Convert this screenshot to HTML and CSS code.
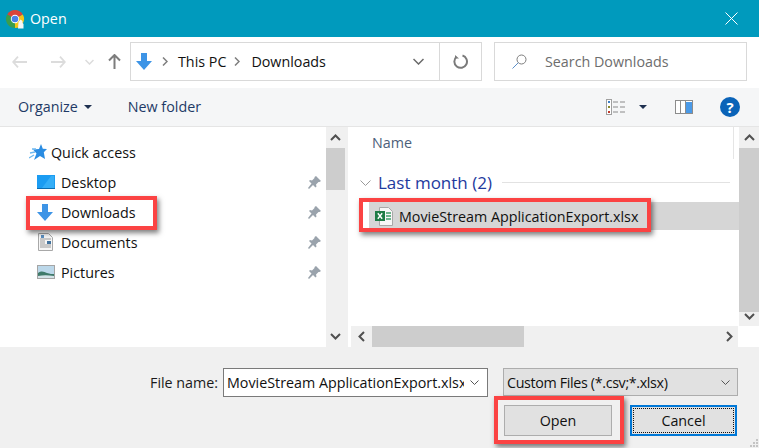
FILE: index.html
```html
<!DOCTYPE html>
<html>
<head lang="en">
    <meta charset="UTF-8">
    <title>Open</title>
    <link rel="stylesheet" href="styles.css">
</head>
<body>
<div id="dialog">
    <div class="titlebar">
        <svg class="chrome" width="20" height="20" viewBox="0 0 20 20">
            <path d="M10 10L2.200 5.500A9 9 0 0 1 17.800 5.500z" fill="#d9443a"/>
            <path d="M10 10L2.200 5.500A9 9 0 0 0 10 19z" fill="#3b9d4c"/>
            <path d="M10 10L17.800 5.500A9 9 0 0 1 10 19z" fill="#f5c518"/>
            <circle cx="10" cy="10" r="4.200" fill="#fff"/>
            <circle cx="10" cy="10" r="3.300" fill="#4a80e8"/>
            <path d="M13.500 13l2-2.500 2 1.500v2l1 1v4.500h-5.500z" fill="#f6f6f6"/>
        </svg>
        <span class="title">Open</span>
        <svg class="close" width="13" height="13" viewBox="0 0 13 13"><path d="M.5.500l12 12M12.500.500l-12 12" stroke="#fff" fill="none"/></svg>
    </div>

    <div class="nav">
        <svg class="nav-arrow" width="15" height="12" viewBox="0 0 15 12"><path d="M6 .7L1.200 6 6 11.300M1.200 6H15" stroke="#dcdcdc" stroke-width="1.800" fill="none"/></svg>
        <svg class="nav-arrow next" width="15" height="12" viewBox="0 0 15 12"><path d="M9 .7L13.800 6 9 11.300M13.800 6H0" stroke="#dcdcdc" stroke-width="1.800" fill="none"/></svg>
        <svg class="nav-drop" width="9" height="6" viewBox="0 0 9 6"><path d="M.5 1l4 4 4-4" stroke="#dcdcdc" stroke-width="1.500" fill="none"/></svg>
        <svg class="nav-up" width="13" height="15" viewBox="0 0 13 15"><path d="M1 6.500l5.500-5.500 5.500 5.500M6.500 1v14" stroke="#7d7d7d" stroke-width="2" fill="none"/></svg>
        <div class="address">
            <svg class="addr-icon" width="16" height="17" viewBox="0 0 16 17"><path d="M5 0h6v8h5l-8 9-8-9h5z" fill="#3d94e6"/></svg>
            <svg class="crumb-sep" width="6" height="9" viewBox="0 0 6 9"><path d="M1 .500l4 4-4 4" stroke="#7d7d7d" stroke-width="1.500" fill="none"/></svg>
            <span class="crumb">This PC</span>
            <svg class="crumb-sep second" width="6" height="9" viewBox="0 0 6 9"><path d="M1 .500l4 4-4 4" stroke="#7d7d7d" stroke-width="1.500" fill="none"/></svg>
            <span class="crumb">Downloads</span>
            <svg class="addr-drop" width="11" height="7" viewBox="0 0 11 7"><path d="M.5 1l5 5 5-5" stroke="#6a6a6a" stroke-width="1.500" fill="none"/></svg>
            <div class="refresh">
                <svg width="15" height="15" viewBox="0 0 15 15"><path d="M3.500 2.800A6.300 6.300 0 1 0 9.500 1.500" stroke="#7a7a7a" stroke-width="2" fill="none"/><path d="M2 1v3.500h4z" fill="#7a7a7a"/></svg>
            </div>
        </div>
        <div class="search">
            <svg width="15" height="15" viewBox="0 0 15 15"><circle cx="9.500" cy="5.500" r="4.500" stroke="#7d7d7d" fill="none"/><path d="M6.200 8.800L.5 14.500" stroke="#5b8fc7" fill="none"/></svg>
            <span>Search Downloads</span>
        </div>
    </div>

    <div class="toolbar">
        <span class="tool">Organize</span>
        <span class="caret"></span>
        <span class="tool newfolder">New folder</span>
        <svg class="views" width="19" height="16" viewBox="0 0 19 16">
            <rect x=".5" y=".5" width="5" height="15" fill="#fff" stroke="#a0a0a0"/>
            <rect x="2" y="2" width="2" height="2" fill="#3d7fc4"/>
            <rect x="2" y="7" width="2" height="2" fill="#8a8a2a"/>
            <rect x="2" y="12" width="2" height="2" fill="#c0392b"/>
            <path d="M7 3h5M14 3h5M7 8h5M14 8h5M7 13h5M14 13h5" stroke="#8a8a8a"/>
        </svg>
        <span class="caret views-caret"></span>
        <svg class="pane-icon" width="18" height="14" viewBox="0 0 18 14">
            <rect x=".5" y=".5" width="17" height="13" fill="#fff" stroke="#8c8c8c"/>
            <rect x="5" y="1" width="1" height="12" fill="#8c8c8c"/>
            <rect x="11" y="2" width="6" height="11" fill="#4a9ae8"/>
            <rect x="10" y="1" width="1" height="12" fill="#8c8c8c"/>
        </svg>
        <div class="help">?</div>
    </div>

    <div class="panes">
        <div class="sidebar">
            <div class="tree">
                <div class="tree-row quick">
                    <svg class="quick-icon" width="18" height="16" viewBox="0 0 18 16"><path d="M12 0l1.800 4.800 4.200.2-3.200 3.300L16 15l-5-3-6 4 2.500-6.500L4 5.500l6-.5z" fill="#2a8ce2"/><path d="M0 14l5-3M1 9l5-1M3 5h4" stroke="#6db8ef" stroke-width="1.300"/></svg>
                    <span>Quick access</span>
                </div>
                <div class="tree-row">
                    <div class="slot"><svg width="18" height="14" viewBox="0 0 18 14"><rect width="18" height="14" fill="#1b9cf2"/><path d="M0 13.500h18" stroke="#0b6cb0"/><path d="M14 1L5 13h12V1z" fill="#35aef7"/></svg></div>
                    <span>Desktop</span>
                    <svg class="pin" width="13" height="13" viewBox="0 0 13 13"><path d="M8 0l5 5-1.500 1-1 0-2.500 2.500.5 2-1 1-2.500-2.500L1 13 0 12l3.500-4.500L1 5l1-1 2 .5L6.500 2V1z" fill="#9aa3ac"/></svg>
                </div>
                <div class="tree-row">
                    <div class="slot"><svg width="16" height="17" viewBox="0 0 16 17"><path d="M5 0h6v8h5l-8 9-8-9h5z" fill="#3d94e6"/></svg></div>
                    <span>Downloads</span>
                    <svg class="pin" width="13" height="13" viewBox="0 0 13 13"><path d="M8 0l5 5-1.500 1-1 0-2.500 2.500.5 2-1 1-2.500-2.500L1 13 0 12l3.500-4.500L1 5l1-1 2 .5L6.500 2V1z" fill="#9aa3ac"/></svg>
                </div>
                <div class="tree-row">
                    <div class="slot"><svg class="doc-icon" width="15" height="18" viewBox="0 0 15 18"><path d="M.5.500h10l4 4v13H.5z" fill="#f6f6f6" stroke="#a8a8a8"/><path d="M2 6h11M2 12h11M2 14h11M2 8h5M2 10h5" stroke="#9a9a9a"/><rect x="3" y="2" width="3" height="3" fill="#5a8fc0"/><rect x="9" y="8" width="4" height="3" fill="#41729e"/></svg></div>
                    <span>Documents</span>
                    <svg class="pin" width="13" height="13" viewBox="0 0 13 13"><path d="M8 0l5 5-1.500 1-1 0-2.500 2.500.5 2-1 1-2.500-2.500L1 13 0 12l3.500-4.500L1 5l1-1 2 .5L6.500 2V1z" fill="#9aa3ac"/></svg>
                </div>
                <div class="tree-row">
                    <div class="slot"><svg width="18" height="14" viewBox="0 0 18 14"><rect x=".5" y=".5" width="17" height="13" fill="#bcd8ea" stroke="#a5a5a5"/><path d="M1 8c4-3 6-1 9 0s5 1 7 1v4H1z" fill="#3f7a6a"/><path d="M1 11c5-1 10-1 16 0v2H1z" fill="#d5e3e8"/></svg></div>
                    <span>Pictures</span>
                    <svg class="pin" width="13" height="13" viewBox="0 0 13 13"><path d="M8 0l5 5-1.500 1-1 0-2.500 2.500.5 2-1 1-2.500-2.500L1 13 0 12l3.500-4.500L1 5l1-1 2 .5L6.500 2V1z" fill="#9aa3ac"/></svg>
                </div>
            </div>
            <div class="vscroll">
                <svg class="arrow" width="11" height="7" viewBox="0 0 11 7"><path d="M1 6l4.500-4.500L10 6" stroke="#505050" stroke-width="2" fill="none"/></svg>
                <div class="thumb side-thumb"></div>
                <svg class="arrow down" width="11" height="7" viewBox="0 0 11 7"><path d="M1 1l4.500 4.500L10 1" stroke="#505050" stroke-width="2" fill="none"/></svg>
            </div>
        </div>

        <div class="main">
            <div class="main-top">
                <div class="files">
                    <div class="colhead"><span>Name</span></div>
                    <div class="group">
                        <svg width="11" height="6" viewBox="0 0 11 6"><path d="M.5.500l5 5 5-5" stroke="#9a9a9a" fill="none"/></svg>
                        <span class="group-name">Last month (2)</span>
                        <div class="group-line"></div>
                    </div>
                    <div class="file">
                        <svg width="18" height="19" viewBox="0 0 18 19"><path d="M4.500.500h9l4 4v14h-13z" fill="#f7f7f7" stroke="#a8a8a8"/><path d="M11 6h5M11 9h5M11 12h5" stroke="#3f9e6a" stroke-width="1.500"/><rect y="4" width="10" height="10" fill="#1e7b45"/><path d="M2.800 6.200l4.400 5.600M7.200 6.200l-4.400 5.600" stroke="#fff" stroke-width="1.400"/></svg>
                        <span>MovieStream ApplicationExport.xlsx</span>
                    </div>
                </div>
                <div class="vscroll main-scroll">
                    <svg class="arrow" width="11" height="7" viewBox="0 0 11 7"><path d="M1 6l4.500-4.500L10 6" stroke="#505050" stroke-width="2" fill="none"/></svg>
                    <div class="thumb main-thumb"></div>
                    <svg class="arrow down" width="11" height="7" viewBox="0 0 11 7"><path d="M1 1l4.500 4.500L10 1" stroke="#505050" stroke-width="2" fill="none"/></svg>
                </div>
            </div>
            <div class="hscroll">
                <div class="hbar">
                    <svg width="7" height="11" viewBox="0 0 7 11"><path d="M6 1L1.500 5.500 6 10" stroke="#505050" stroke-width="2" fill="none"/></svg>
                    <div class="hthumb"></div>
                    <svg class="hright" width="7" height="11" viewBox="0 0 7 11"><path d="M1 1l4.500 4.500L1 10" stroke="#505050" stroke-width="2" fill="none"/></svg>
                </div>
                <div class="corner"></div>
            </div>
        </div>
    </div>

    <div class="footer">
        <div class="name-row">
            <label class="name-label">File name:</label>
            <div class="name-input">
                <span class="name-text">MovieStream ApplicationExport.xlsx</span>
                <svg width="9" height="5" viewBox="0 0 9 5"><path d="M.5.500l4 4 4-4" stroke="#555" fill="none"/></svg>
            </div>
            <div class="type-select">
                <span>Custom Files (*.csv;*.xlsx)</span>
                <svg width="9" height="5" viewBox="0 0 9 5"><path d="M.5.500l4 4 4-4" stroke="#555" fill="none"/></svg>
            </div>
        </div>
        <div class="button-row">
            <div class="btn">Open</div>
            <div class="btn cancel"><span class="dotted">Cancel</span></div>
        </div>
    </div>

    <div class="mark mark-side"></div>
    <div class="mark mark-file"></div>
    <div class="mark mark-open"></div>
    <svg class="grip" width="10" height="10" viewBox="0 0 10 10"><path d="M7 1h2v2H7zM4 4h2v2H4zM7 4h2v2H7zM1 7h2v2H1zM4 7h2v2H4zM7 7h2v2H7z" fill="#c4c4c4"/></svg>
</div>
</body>
</html>
```

FILE: styles.css
```css
*{
    margin: 0;
    padding: 0;
    box-sizing: border-box;
}
body{
    background: #f0f0f0;
}
#dialog{
    width: 759px;
    height: 448px;
    position: relative;
    overflow: hidden;
    font-family: "Open Sans", "Liberation Sans", sans-serif;
    font-size: 14.3px;
    color: #111;
    display: flex;
    flex-direction: column;
}

/* title bar */
.titlebar{
    height: 37px;
    flex: none;
    background: #009abd;
    color: #fff;
    display: flex;
    align-items: center;
    padding: 0 21px 0 5px;
}
.title{
    margin-left: 5px;
}
.close{
    margin-left: auto;
}

/* back/forward row */
.nav{
    height: 51px;
    flex: none;
    background: #fff;
    display: flex;
    align-items: center;
    padding: 0 12px 2px 12px;
}
.next{
    margin-left: 24px;
}
.nav-drop{
    margin-left: 19px;
}
.nav-up{
    margin-left: 14px;
}
.address{
    width: 352px;
    height: 39px;
    margin-left: 9px;
    border: 1px solid #d9d9d9;
    display: flex;
    align-items: center;
    padding-left: 5px;
}
.crumb-sep{
    margin: 0 10px;
}
.second{
    margin: 0 11px 0 8px;
}
.addr-drop{
    margin-left: auto;
    margin-right: 15px;
}
.refresh{
    width: 42px;
    height: 37px;
    border-left: 1px solid #d9d9d9;
    display: flex;
    align-items: center;
    justify-content: center;
}
.search{
    width: 253px;
    height: 39px;
    margin-left: 12px;
    border: 1px solid #d9d9d9;
    display: flex;
    align-items: center;
    padding-left: 17px;
    color: #6d6d6d;
}
.search span{
    margin-left: 18px;
}

/* organize row */
.toolbar{
    height: 39px;
    flex: none;
    background: #f5f6f7;
    border-bottom: 1px solid #e5e5e5;
    display: flex;
    align-items: center;
    padding: 0 19px 1px 18px;
    color: #1e3a66;
}
.caret{
    width: 0;
    height: 0;
    border-left: 4px solid transparent;
    border-right: 4px solid transparent;
    border-top: 4px solid #1e3050;
    margin-left: 6px;
}
.newfolder{
    margin-left: 36px;
}
.views{
    margin-left: auto;
}
.views-caret{
    margin-left: 14px;
}
.pane-icon{
    margin-left: 28px;
}
.help{
    width: 20px;
    height: 20px;
    margin-left: 27px;
    border-radius: 50%;
    background: #0a63b8;
    color: #fff;
    font-weight: bold;
    font-size: 15px;
    line-height: 20px;
    text-align: center;
}

/* tree and file list */
.panes{
    height: 220px;
    flex: none;
    display: flex;
    background: #f0f0f0;
}
.sidebar{
    width: 345px;
    display: flex;
    background: #fff;
}
.tree{
    flex: 1;
    padding: 10px 5px 0 29px;
}
.tree-row{
    height: 30px;
    display: flex;
    align-items: center;
    padding-left: 8px;
}
.slot{
    width: 24px;
    flex: none;
    display: flex;
    align-items: center;
}
.doc-icon{
    margin-left: 1px;
}
.quick{
    padding-left: 0;
}
.quick-icon{
    margin-right: 4px;
}
.pin{
    flex: none;
    margin-left: auto;
}
.vscroll{
    width: 19px;
    flex: none;
    background: #f0f0f0;
    display: flex;
    flex-direction: column;
    align-items: center;
    padding-top: 7px;
}
.arrow{
    flex: none;
}
.arrow.down{
    margin-top: auto;
    margin-bottom: 7px;
}
.thumb{
    width: 100%;
    background: #cdcdcd;
    margin-top: 7px;
}
.side-thumb{
    height: 42px;
}
.main{
    width: 411px;
    margin-left: 3px;
    background: #fff;
    display: flex;
    flex-direction: column;
}
.main-top{
    flex: 1;
    display: flex;
    min-height: 0;
}
.files{
    flex: 1;
}
.colhead{
    height: 32px;
    margin-right: 5px;
    border-right: 1px solid #e5e5e5;
    padding-left: 24px;
    line-height: 32px;
    color: #4c607a;
}
.group{
    height: 43px;
    display: flex;
    align-items: center;
    padding: 4px 9px 0 12px;
    color: #1e3a9e;
}
.group-name{
    font-size: 17px;
    margin-left: 7px;
}
.group-line{
    flex: 1;
    height: 1px;
    margin-left: 10px;
    background: #e2e2e2;
}
.file{
    height: 28px;
    margin-left: 21px;
    background: #d6d6d6;
    display: flex;
    align-items: center;
    padding-left: 6px;
}
.file span{
    margin-left: 6px;
}
.main-scroll{
    width: 20px;
}
.main-thumb{
    height: 164px;
}
.main-scroll .arrow.down{
    margin-bottom: 6px;
}
.hscroll{
    height: 21px;
    flex: none;
    display: flex;
}
.hbar{
    flex: 1;
    margin-left: 3px;
    background: #f0f0f0;
    display: flex;
    align-items: center;
    padding: 0 5px 0 7px;
}
.hthumb{
    width: 152px;
    height: 100%;
    margin-left: 7px;
    background: #cdcdcd;
}
.hright{
    margin-left: auto;
}
.corner{
    width: 21px;
    background: #fff;
}

/* file name and buttons */
.footer{
    flex: 1;
    background: #f0f0f0;
    padding: 21px 21px 0 150px;
}
.name-row{
    display: flex;
    align-items: flex-start;
}
.name-label{
    width: 73px;
    line-height: 29px;
    color: #1a1a1a;
}
.name-input{
    width: 265px;
    height: 29px;
    background: #fff;
    border: 1px solid #7a7a7a;
    display: flex;
    align-items: center;
    padding: 0 8px 0 3px;
}
.name-text{
    width: 237px;
    overflow: hidden;
    white-space: nowrap;
}
.name-input svg{
    margin-left: auto;
}
.type-select{
    width: 235px;
    height: 28px;
    margin-left: 15px;
    background: #e1e1e1;
    border: 1px solid #adadad;
    display: flex;
    align-items: center;
    padding: 0 7px 0 3px;
    letter-spacing: -0.35px;
}
.type-select svg{
    margin-left: auto;
}
.button-row{
    display: flex;
    justify-content: flex-end;
    gap: 18px;
    margin-top: 8px;
    padding-right: 1px;
}
.btn{
    width: 108px;
    height: 31px;
    background: #e1e1e1;
    border: 1px solid #adadad;
    line-height: 29px;
    text-align: center;
}
.cancel{
    width: 107px;
    border: 2px solid #0078d7;
    padding: 1px;
    line-height: 23px;
}
.dotted{
    display: block;
    height: 25px;
    border: 1px dotted #111;
}

/* red marks drawn over the screenshot */
.mark{
    position: absolute;
    border: 4px solid #fb4343;
    box-shadow: 2px 3px 5px rgba(0,0,0,0.5);
}
.mark-side{
    left: 26px;
    top: 196px;
    width: 131px;
    height: 34px;
}
.mark-file{
    left: 359px;
    top: 198px;
    width: 292px;
    height: 34px;
}
.mark-open{
    left: 494px;
    top: 396px;
    width: 130px;
    height: 48px;
}
.grip{
    position: absolute;
    right: 0;
    bottom: 0;
}
```
